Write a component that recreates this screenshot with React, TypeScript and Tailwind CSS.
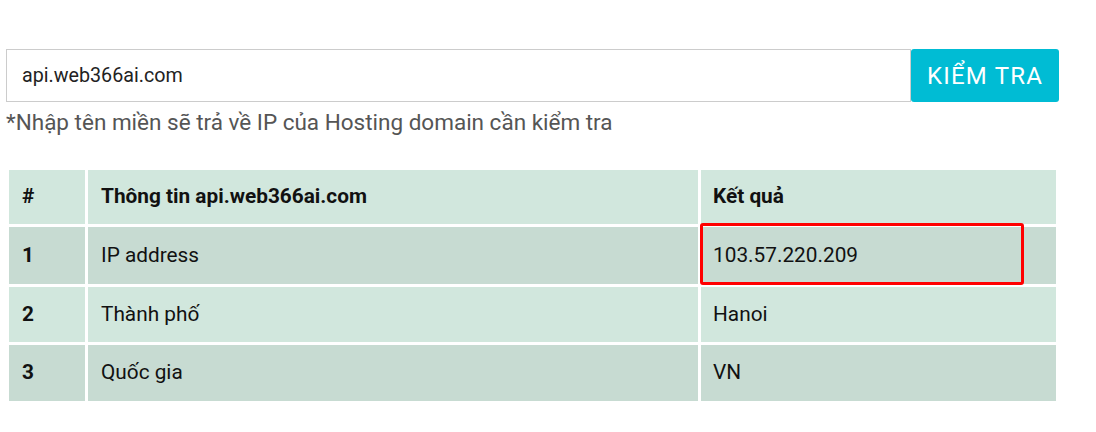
import React from "react";

const rows = [
  { n: "1", k: "IP address", v: "103.57.220.209", bg: "bg-[#c7dbd2]", h: "h-[57px]" },
  { n: "2", k: "Thành phố", v: "Hanoi", bg: "bg-[#d1e7dd]", h: "h-[55px]" },
  { n: "3", k: "Quốc gia", v: "VN", bg: "bg-[#c7dbd2]", h: "h-[56px]" },
];

export default function App() {
  return (
    <div className="w-[1096px] h-[432px] bg-white font-['Roboto',sans-serif] text-[#111]">
      <div className="pt-[49px] pl-[6px] w-[1059px]">
        <div className="flex h-[53px]">
          <div className="flex-1 border border-[#cccccc] flex items-center pl-[15px] text-[19.7px] text-[#222]">
            api.web366ai.com
          </div>
          <button className="w-[148px] h-[53px] bg-[#00bcd4] text-white text-[24px] tracking-[1.2px] rounded-[3px] flex items-center justify-center">
            KIỂM TRA
          </button>
        </div>
        <div className="mt-[6px] text-[22.5px] leading-[28px] text-[#555]">
          *Nhập tên miền sẽ trả về IP của Hosting domain cần kiểm tra
        </div>
        <div className="relative mt-[31px] grid grid-cols-[76px_610px_355px] gap-[3px] p-[3px] text-[20.8px]">
          <div className="h-[54px] bg-[#d1e7dd] flex items-center pl-[13px] font-bold">#</div>
          <div className="h-[54px] bg-[#d1e7dd] flex items-center pl-[13px] font-bold">Thông tin api.web366ai.com</div>
          <div className="h-[54px] bg-[#d1e7dd] flex items-center pl-[12px] font-bold">Kết quả</div>
          {rows.map((r) => (
            <React.Fragment key={r.n}>
              <div className={`${r.h} ${r.bg} flex items-center pl-[13px] font-bold`}>{r.n}</div>
              <div className={`${r.h} ${r.bg} flex items-center pl-[13px]`}>{r.k}</div>
              <div className={`${r.h} ${r.bg} flex items-center pl-[12px]`}>{r.v}</div>
            </React.Fragment>
          ))}
          <div className="absolute left-[694px] top-[56px] w-[324px] h-[62px] border-[3px] border-[#ff0000] rounded-[3px] pointer-events-none" />
        </div>
      </div>
    </div>
  );
}
